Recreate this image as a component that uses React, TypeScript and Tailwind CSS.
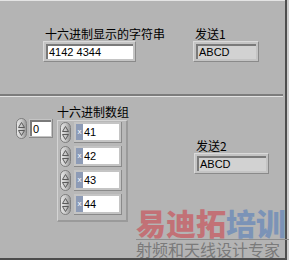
const cjk = { fontFamily: '"Noto Sans CJK SC", sans-serif' }
const num = { fontFamily: '"Liberation Sans", Arial, sans-serif' }

function Spinner() {
  return (
    <div className="w-[11px] h-[21px] rounded-full border border-[#7e7e7e] bg-gradient-to-r from-[#e8e8e8] via-[#c8c8c8] to-[#9a9a9a] flex flex-col items-center justify-center gap-[2px]">
      <svg width="7" height="6" viewBox="0 0 7 6">
        <path d="M3.5 0.5 L6.5 5.5 L0.5 5.5 Z" fill="none" stroke="#5a5a5a" strokeWidth="1" />
      </svg>
      <svg width="7" height="6" viewBox="0 0 7 6">
        <path d="M0.5 0.5 L6.5 0.5 L3.5 5.5 Z" fill="none" stroke="#5a5a5a" strokeWidth="1" />
      </svg>
    </div>
  )
}

function Field({ w, text, bg = "bg-white" }: { w: string; text: string; bg?: string }) {
  return (
    <div className={`${w} h-[21px] bg-[#c4c4c4] border-t border-l border-[#dadada] border-r border-b border-r-[#8a8a8a] border-b-[#8a8a8a] p-[2px]`}>
      <div className={`h-full ${bg} border-t-2 border-l-2 border-[#7a7a7a] flex items-center pl-[1px] text-[11px] text-black`} style={num}>
        {text}
      </div>
    </div>
  )
}

function Element({ value }: { value: string }) {
  return (
    <div className="flex items-center h-[21px]">
      <Spinner />
      <div className="ml-[3px] flex-1 h-[21px] bg-[#c4c4c4] border-r border-b border-[#8a8a8a] p-[2px] flex">
        <div className="w-[7px] h-full bg-[#8d9bb6] flex items-center justify-center text-[8px] leading-none text-white" style={num}>x</div>
        <div className="flex-1 h-full bg-white flex items-center pl-[1px] text-[11px] text-black" style={num}>{value}</div>
      </div>
    </div>
  )
}

export default function App() {
  return (
    <div className="w-[289px] h-[260px] flex bg-[#b4b4b4] overflow-hidden relative">
      <div className="w-[285px] flex flex-col border-t border-[#e4e4e4]">
        {/* top: string display */}
        <div className="h-[93px] flex pl-[43px] pt-[25px]">
          <div className="w-[93px]">
            <div className="h-[15px] pl-[2px] text-[12px] leading-[15px] text-black whitespace-nowrap" style={cjk}>十六进制显示的字符串</div>
            <Field w="w-[93px]" text="4142 4344" />
          </div>
          <div className="ml-[57px]">
            <div className="h-[15px] pl-[2px] text-[12px] leading-[15px] text-black" style={cjk}>发送1</div>
            <Field w="w-[66px]" text="ABCD" bg="bg-[#d2d2d2]" />
          </div>
        </div>

        {/* divider */}
        <div className="w-[283px] h-[2px] bg-[#7c7c7c]" />
        <div className="w-[283px] h-px bg-[#e2e2e2]" />

        {/* bottom: array */}
        <div className="flex-1 flex items-start pl-[16px]">
          <div className="mt-[21px] flex items-center gap-[2px]">
            <Spinner />
            <div className="w-[24px] h-[19px] bg-[#c4c4c4] border-r border-b border-[#8a8a8a] p-[1px]">
              <div className="h-full bg-white border-t-2 border-l-2 border-[#7a7a7a] flex items-center pl-[1px] text-[11px]" style={num}>0</div>
            </div>
          </div>
          <div className="ml-[4px] mt-[7px] w-[71px]">
            <div className="h-[16px] text-[12px] leading-[15px] text-black whitespace-nowrap" style={cjk}>十六进制数组</div>
            <div className="h-[102px] bg-[#b8b8b8] border-t border-l border-[#d4d4d4] border-r-2 border-b-2 border-r-[#9a9a9a] border-b-[#9a9a9a] pl-[2px] pr-[4px] pt-[1px] flex flex-col gap-[3px]">
              <Element value="41" />
              <Element value="42" />
              <Element value="43" />
              <Element value="44" />
            </div>
          </div>
          <div className="ml-[66px] mt-[42px]">
            <div className="h-[14px] pl-[2px] text-[12px] leading-[14px] text-black" style={cjk}>发送2</div>
            <Field w="w-[75px]" text="ABCD" bg="bg-[#d2d2d2]" />
          </div>
        </div>
        <div className="h-[2px] bg-[#4c4c4c]" />
      </div>
      <div className="w-[4px] border-l-2 border-[#4e4e4e] bg-[#cdcdcd]" />

      {/* watermark overlay */}
      <div className="absolute left-[136px] top-[205px] w-[153px] h-[55px] flex flex-col items-start" style={cjk}>
        <div className="h-[34px] flex items-center text-[30px] font-black leading-[34px] whitespace-nowrap">
          <span className="text-[#c46a70] opacity-90">易迪拓</span>
          <span className="text-[#7590b8] opacity-90">培训</span>
        </div>
        <div className="w-full h-px bg-[#8e8e8e]" />
        <div className="mt-[2px] h-[15px] text-[16px] leading-[15px] text-[#7a7a7a] whitespace-nowrap">射频和天线设计专家</div>
      </div>
    </div>
  )
}
